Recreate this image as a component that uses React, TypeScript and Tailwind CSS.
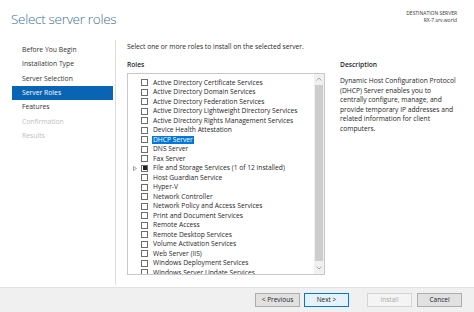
import type { ReactNode } from 'react';

const steps = [
  { label: 'Before You Begin', state: 'done' },
  { label: 'Installation Type', state: 'done' },
  { label: 'Server Selection', state: 'done' },
  { label: 'Server Roles', state: 'active' },
  { label: 'Features', state: 'done' },
  { label: 'Confirmation', state: 'off' },
  { label: 'Results', state: 'off' },
];

const roles = [
  'Active Directory Certificate Services',
  'Active Directory Domain Services',
  'Active Directory Federation Services',
  'Active Directory Lightweight Directory Services',
  'Active Directory Rights Management Services',
  'Device Health Attestation',
  'DHCP Server',
  'DNS Server',
  'Fax Server',
  'File and Storage Services (1 of 12 installed)',
  'Host Guardian Service',
  'Hyper-V',
  'Network Controller',
  'Network Policy and Access Services',
  'Print and Document Services',
  'Remote Access',
  'Remote Desktop Services',
  'Volume Activation Services',
  'Web Server (IIS)',
  'Windows Deployment Services',
  'Windows Server Update Services',
];

function Button({ children, variant }: { children: ReactNode; variant?: 'focus' | 'disabled' }) {
  let cls = 'bg-[#e1e1e1] border-[#adadad] text-[#222]';
  if (variant === 'focus') cls = 'bg-[#e5f1fb] border-[#0078d7] text-[#222]';
  if (variant === 'disabled') cls = 'bg-[#f4f4f4] border-[#d4d4d4] text-[#a8a8a8]';
  return (
    <div className={`w-[45px] h-[14px] border flex items-center justify-center text-[6.5px] leading-none ${cls}`}>
      {children}
    </div>
  );
}

export default function App() {
  return (
    <div className="w-[474px] h-[312px] bg-white flex flex-col overflow-hidden text-[#262626] font-['Open_Sans','Noto_Sans',sans-serif]">
      {/* header */}
      <div className="h-[40px] flex justify-between items-start pl-[11px] pr-[17px]">
        <h1 className="mt-[10px] text-[13.5px] leading-[19px] font-light tracking-[-0.3px] text-[#3f7196]">
          Select server roles
        </h1>
        <div className="mt-[10px] text-right text-[5px] leading-[7px] text-[#333]">
          <div>DESTINATION SERVER</div>
          <div>RX-7.srv.world</div>
        </div>
      </div>

      <div className="flex flex-1 min-h-0">
        {/* steps */}
        <div className="w-[116px] pl-[12px] pr-[2px] pt-[3px] border-r border-[#dcdcdc] mb-[2px]">
          {steps.map((s) => (
            <div
              key={s.label}
              className={`h-[14.3px] pl-[10px] flex items-center text-[6.8px] ${
                s.state === 'active'
                  ? 'bg-[#0a64b4] text-white'
                  : s.state === 'off'
                    ? 'text-[#c0c0c0]'
                    : 'text-[#333]'
              }`}
            >
              {s.label}
            </div>
          ))}
        </div>

        {/* content */}
        <div className="flex-1 pl-[11px] pt-[3px] text-[6.7px]">
          <div className="leading-[8px]">Select one or more roles to install on the selected server.</div>
          <div className="flex mt-[10px]">
            <div className="w-[198px]">
              <div className="leading-[8px] font-semibold">Roles</div>
              <div className="mt-[4px] h-[202px] border border-[#c8c8c8] flex">
                <div className="flex-1 pt-[4px] overflow-hidden">
                  {roles.map((r, i) => (
                    <div key={r} className="h-[9.5px] flex items-center">
                      <span className="w-[13px] flex justify-center">
                        {i === 9 && (
                          <svg width="4" height="5" viewBox="0 0 4 5">
                            <path d="M0.5 0.5 L3.5 2.5 L0.5 4.5 Z" fill="none" stroke="#8a8a8a" strokeWidth="0.8" />
                          </svg>
                        )}
                      </span>
                      <span className="w-[7px] h-[7px] border border-[#6d6d6d] bg-white flex items-center justify-center">
                        {i === 9 && <span className="w-[4px] h-[4px] bg-[#222]" />}
                      </span>
                      <span
                        className={`ml-[4px] px-[1px] leading-[8px] whitespace-nowrap ${
                          i === 6 ? 'bg-[#0078d7] text-white' : ''
                        }`}
                      >
                        {r}
                      </span>
                    </div>
                  ))}
                </div>
                <div className="w-[10px] bg-[#f0f0f0] flex flex-col items-center">
                  <div className="h-[10px] flex items-center justify-center">
                    <svg width="6" height="4" viewBox="0 0 6 4">
                      <path d="M0.5 3.5 L3 1 L5.5 3.5" fill="none" stroke="#a0a0a0" strokeWidth="0.9" />
                    </svg>
                  </div>
                  <div className="w-[8px] flex-1 bg-[#cdcdcd] my-[1px]" />
                  <div className="h-[12px] flex items-center justify-center">
                    <svg width="6" height="4" viewBox="0 0 6 4">
                      <path d="M0.5 0.5 L3 3 L5.5 0.5" fill="none" stroke="#a0a0a0" strokeWidth="0.9" />
                    </svg>
                  </div>
                </div>
              </div>
            </div>
            <div className="ml-[15px] w-[119px]">
              <div className="leading-[8px] font-semibold">Description</div>
              <p className="mt-[7px] leading-[9.6px]">
                Dynamic Host Configuration Protocol (DHCP) Server enables you to centrally configure, manage, and
                provide temporary IP addresses and related information for client computers.
              </p>
            </div>
          </div>
        </div>
      </div>

      {/* footer */}
      <div className="h-[25px] bg-[#f0f0f0] border-t border-[#e0e0e0] flex items-center justify-end pr-[12px]">
        <Button>&lt; Previous</Button>
        <div className="ml-[4px]">
          <Button variant="focus">Next &gt;</Button>
        </div>
        <div className="ml-[18px]">
          <Button variant="disabled">Install</Button>
        </div>
        <div className="ml-[5px]">
          <Button>Cancel</Button>
        </div>
      </div>
    </div>
  );
}
